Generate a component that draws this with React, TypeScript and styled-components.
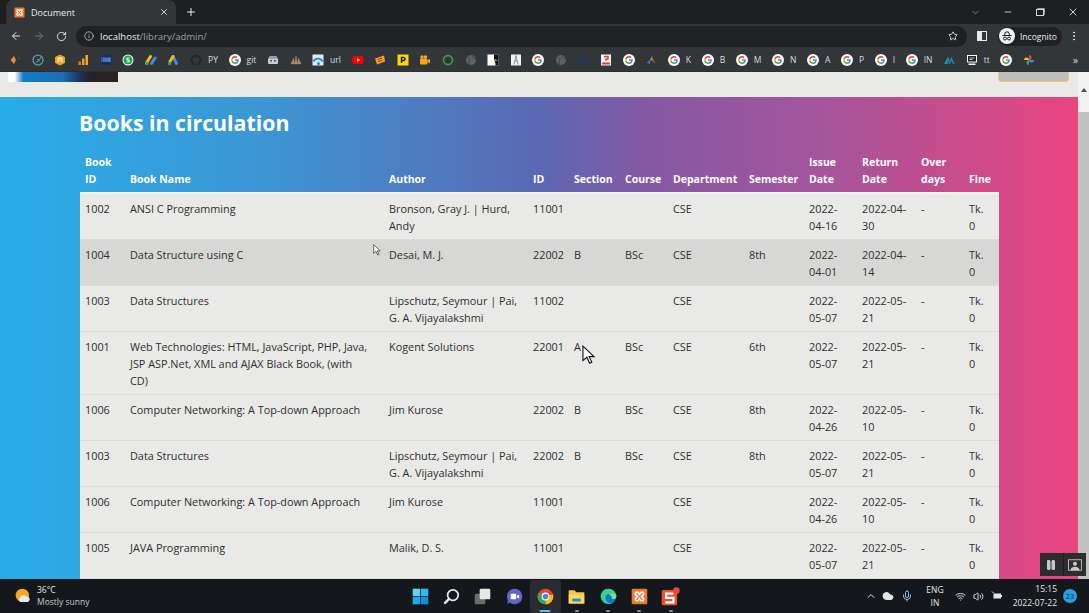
import React, { FC, ReactNode } from 'react'
import styled, { createGlobalStyle } from 'styled-components'
import { ArrowLeft, ArrowRight, RotateCw, Info, Star, X, Plus, ChevronDown, Minus, EllipsisVertical, ChevronUp, Mic, Wifi, Volume2, Cloud, Pause } from 'lucide-react'

const GlobalStyle = createGlobalStyle`
  html, body {
    margin: 0;
    padding: 0;
    height: 100%;
    overflow: hidden;
    background: #202124;
    font-family: "Open Sans", "Noto Sans", sans-serif;
  }
  * { box-sizing: border-box; }
`

// window
const Screen = styled('div')`
  position: relative;
  width: 1089px;
  height: 613px;
  display: flex;
  flex-direction: column;
  overflow: hidden;
`

// tab strip
const TabStrip = styled('div')`
  height: 24px;
  flex: none;
  background: #1c1e20;
  display: flex;
  align-items: flex-end;
  padding-left: 6px;
  color: #e8eaed;
`
const Tab = styled('div')`
  width: 170px;
  height: 24px;
  background: #323639;
  border-radius: 7px 7px 0 0;
  display: flex;
  align-items: center;
  padding: 0 7px 0 8px;
  font-size: 9px;
  gap: 6px;
`
const TabTitle = styled('span')`
  flex: 1;
`
const NewTab = styled('div')`
  width: 30px;
  height: 24px;
  display: flex;
  align-items: center;
  justify-content: center;
`
const WindowButtons = styled('div')`
  margin-left: auto;
  height: 24px;
  display: flex;
  align-items: center;
  color: #d5d7da;
`
const WindowButton = styled('div')`
  width: 32.5px;
  display: flex;
  justify-content: center;
  opacity: ${(p: { $dim?: boolean }) => (p.$dim ? 0.55 : 1)};
`
const RestoreIcon = styled('div')`
  width: 8px;
  height: 7px;
  border: 1px solid #d5d7da;
  box-shadow: 1px -1px 0 -0.3px #d5d7da;
`

// toolbar
const Toolbar = styled('div')`
  height: 24px;
  flex: none;
  background: #323639;
  display: flex;
  align-items: center;
  padding: 0 9px 0 4px;
  color: #e8eaed;
`
const NavButton = styled('div')`
  width: 23px;
  display: flex;
  justify-content: center;
  color: ${(p: { $off?: boolean }) => (p.$off ? '#73767a' : '#e8eaed')};
`
const AddressBar = styled('div')`
  width: 345px;
  flex: 1;
  height: 21px;
  margin-left: 3px;
  border-radius: 11px;
  background: #202124;
  display: flex;
  align-items: center;
  padding: 0 9px 0 8px;
  font-size: 9.5px;
  gap: 6px;
`
const Url = styled('span')`
  flex: 1;
  color: #9aa0a6;
  span { color: #e8eaed; }
`
const SidePanelIcon = styled('div')`
  width: 10px;
  height: 10px;
  margin: 0 11px 0 10px;
  border: 1.5px solid #e8eaed;
  border-left-width: 5px;
  background: #323639;
`
const ProfileChip = styled('div')`
  width: 64px;
  height: 19px;
  border-radius: 10px;
  background: #202124;
  display: flex;
  align-items: center;
  gap: 5px;
  padding-left: 1px;
  font-size: 8.5px;
`
const ProfileFace = styled('div')`
  width: 16px;
  height: 16px;
  border-radius: 50%;
  background: #f1f3f4;
  display: flex;
  align-items: center;
  justify-content: center;
`
const MoreButton = styled('div')`
  width: 18px;
  display: flex;
  justify-content: flex-end;
`

// bookmarks
const BookmarkBar = styled('div')`
  height: 24px;
  flex: none;
  background: #323639;
  display: flex;
  align-items: center;
  padding: 0 0 0 4px;
  color: #dadce0;
  font-size: 8.5px;
  border-bottom: 1px solid #2c2e31;
`
const Bookmark = styled('div')`
  height: 24px;
  display: flex;
  align-items: center;
  padding: 0 5.3px;
  gap: 6px;
`
const BookmarkOverflow = styled('div')`
  margin-left: auto;
  padding-right: 11px;
  font-size: 10px;
`

// page
const Viewport = styled('div')`
  flex: 1;
  min-height: 0;
  display: flex;
  overflow: hidden;
`
const Page = styled('div')`
  flex: 1;
  min-width: 0;
  background: #e9e9e7;
`
const Scrollbar = styled('div')`
  width: 11px;
  flex: none;
  background: #f1f1f1;
  display: flex;
  flex-direction: column;
  align-items: center;
  color: #505050;
`
const ScrollArrow = styled('div')`
  height: 15px;
  margin-top: 5px;
  font-size: 0;
  width: 0;
  border: 3px solid transparent;
  border-bottom: 4px solid #505050;
`
const ScrollThumb = styled('div')`
  width: 11px;
  flex: 1;
  margin-top: 20px;
  background: #c1c1c1;
`
const PageHeader = styled('header')`
  height: 25px;
  display: flex;
  justify-content: space-between;
  align-items: flex-start;
  padding: 0 9px 0 8px;
`
const LogoPiece = styled('div')`
  width: 110px;
  height: 10px;
  background: linear-gradient(90deg, #fdfdfd 0 6%, #0f7cc4 14%, #1a6fb5 50%, #16375c 65%, #2b2022 75%, #2b2022 100%);
`
const LoginButton = styled('div')`
  width: 71px;
  height: 10px;
  background: #bdbdbb;
  border: 1px solid #e8c878;
  border-top: none;
  border-radius: 0 0 4px 4px;
`
const Circulation = styled('section')`
  height: 600px;
  padding: 12px 80px 0;
  background: linear-gradient(90deg, #28ade9 0%, #3d95d3 25%, #5b68b3 50%, #8459a3 60%, #a9549b 78%, #c04e8e 86%, #ea4480 100%);
`
const Title = styled('h1')`
  margin: 0 0 17px -1px;
  height: 28px;
  font-size: 21.3px;
  line-height: 28px;
  font-weight: 700;
  color: #fff;
`
const Table = styled('table')`
  width: 919px;
  table-layout: fixed;
  border-collapse: collapse;
  font-size: 10.85px;
  line-height: 17px;
`
const HeadRow = styled('tr')`
  border-bottom: 2px solid #f4f4f4;
`
const HeadCell = styled('th')`
  padding: 0 3px 4px 5px;
  text-align: left;
  vertical-align: bottom;
  color: #fff;
  font-weight: 700;
  font-size: 10.5px;
  white-space: ${(p: { $nowrap?: boolean }) => (p.$nowrap ? 'nowrap' : 'normal')};
`
const Row = styled('tr')<{ $hover?: boolean }>`
  background: ${(p) => (p.$hover ? '#d7d7d5' : '#e9e9e7')};
  border-bottom: 1px solid #dcdcda;
`
const Cell = styled('td')<{ $padRight?: number }>`
  padding: 6px ${(p) => p.$padRight ?? 3}px 5px 5px;
  vertical-align: top;
  color: #2f2f2f;
`

// taskbar
const Taskbar = styled('div')`
  height: 34px;
  flex: none;
  background: #14181d;
  display: grid;
  grid-template-columns: 1fr auto 1fr;
  align-items: center;
  color: #e6e6e6;
  position: relative;
  z-index: 2;
`
const Weather = styled('div')`
  display: flex;
  align-items: center;
  gap: 6px;
  padding-left: 15px;
  font-size: 8.5px;
  line-height: 12px;
`
const WeatherSub = styled('div')`
  color: #c8c8c8;
`
const TaskIcons = styled('div')`
  display: flex;
  align-items: center;
  margin-left: 2px;
`
const TaskIcon = styled('div')<{ $active?: boolean; $open?: boolean }>`
  position: relative;
  width: 31.3px;
  height: 33px;
  display: flex;
  align-items: center;
  justify-content: center;
  border-radius: 3px;
  background: ${(p) => (p.$active ? '#292c30' : 'transparent')};
  &::after {
    content: '';
    display: ${(p) => (p.$open ? 'block' : 'none')};
    position: absolute;
    bottom: 1px;
    left: 50%;
    transform: translateX(-50%);
    width: ${(p) => (p.$active ? '11px' : '4px')};
    height: 2px;
    border-radius: 1px;
    background: ${(p) => (p.$active ? '#4cc2ff' : '#8b8d90')};
  }
`
const Tray = styled('div')`
  display: flex;
  align-items: center;
  justify-content: flex-end;
  gap: 7px;
  padding-right: 12px;
  font-size: 8.5px;
`
const TrayChevron = styled('div')`
  display: flex;
  margin-right: -2px;
`
const Lang = styled('div')`
  text-align: center;
  line-height: 13px;
  margin: 0 4px 0 6px;
`
const Clock = styled('div')`
  text-align: right;
  line-height: 14px;
  margin: 0 -1px 0 3px;
`
const Badge = styled('div')`
  width: 14px;
  height: 14px;
  border-radius: 50%;
  background: #2b9fe6;
  color: #0d2a40;
  font-size: 7.5px;
  display: flex;
  align-items: center;
  justify-content: center;
`

// overlays
const RecorderPanel = styled('div')`
  position: absolute;
  left: 1040px;
  top: 553px;
  width: 46px;
  height: 23px;
  background: #2d2d30;
  display: flex;
  color: #c9c9c9;
  z-index: 3;
`
const RecorderButton = styled('div')`
  flex: 1;
  display: flex;
  align-items: center;
  justify-content: center;
  & + & { border-left: 1px solid #1d1d1f; }
`
const Pointer = styled('svg')<{ $x: number; $y: number }>`
  position: absolute;
  left: ${(p) => p.$x}px;
  top: ${(p) => p.$y}px;
  z-index: 3;
`

// drawings
const G: FC = () => (
  <svg width="12" height="12" viewBox="0 0 24 24">
    <circle cx="12" cy="12" r="12" fill="#fff" />
    <path d="M19.6 12.2c0-.6-.1-1.1-.2-1.6H12v3.1h4.3a3.700 3.700 0 0 1-1.600 2.400v2h2.600c1.500-1.400 2.300-3.400 2.300-5.900z" fill="#4285f4" />
    <path d="M12 20c2.200 0 4-.7 5.300-1.900l-2.600-2a4.800 4.800 0 0 1-7.200-2.500H4.900v2.100A8 8 0 0 0 12 20z" fill="#34a853" />
    <path d="M7.500 13.600a4.800 4.800 0 0 1 0-3.200V8.300H4.900a8 8 0 0 0 0 7.400z" fill="#fbbc05" />
    <path d="M12 7.200c1.200 0 2.300.4 3.100 1.200l2.300-2.300A8 8 0 0 0 4.900 8.300l2.600 2.100A4.800 4.800 0 0 1 12 7.200z" fill="#ea4335" />
  </svg>
)
const Fav: FC<{ children: ReactNode }> = ({ children }) => (
  <svg width="12" height="12" viewBox="0 0 24 24">{children}</svg>
)
const Xampp: FC<{ size: number }> = ({ size }) => (
  <svg width={size} height={size} viewBox="0 0 24 24">
    <rect x="1" y="1" width="22" height="22" rx="2" fill="#f0782d" />
    <path d="M7 6h3l2 3 2-3h3l1 3-3 3 3 3-1 3h-3l-2-3-2 3H7l-1-3 3-3-3-3z" fill="none" stroke="#fff" strokeWidth="2.400" />
  </svg>
)
const favicons: Record<string, ReactNode> = {
  drop: <><path d="M10 4 3 12l7 8 4-8z" fill="#ef8a2c" /><circle cx="20" cy="9" r="2.500" fill="#17566b" /></>,
  swirl: <><circle cx="12" cy="12" r="10" fill="none" stroke="#4fa6b5" strokeWidth="2.500" /><path d="M7 16c5 0 9-3 10-10M10 11c3-1 5 1 4 4" fill="none" stroke="#4fa6b5" strokeWidth="2" /></>,
  hex: <><path d="M12 1 22 6v12l-10 5-10-5V6z" fill="#f29f1c" /><path d="M8 17V8h8v9M12 8v7" stroke="#fff" strokeWidth="2" fill="none" /></>,
  bars: <><rect x="3" y="15" width="5" height="7" fill="#e37b20" /><rect x="10" y="9" width="5" height="13" fill="#ef9a2a" /><rect x="17" y="2" width="5" height="20" fill="#f5a623" /></>,
  ieee: <><rect x="1" y="2" width="22" height="20" fill="#12306b" /><rect x="3" y="7" width="18" height="9" fill="#6e8cc4" /><path d="M5 7v9M8 7v9M12 7v9M16 7v9" stroke="#12306b" strokeWidth="1.200" /></>,
  whats: <><circle cx="12" cy="12" r="11" fill="#fff" /><circle cx="12" cy="12" r="9" fill="#16a34a" /><path d="M15 8H10L9.500 12H14.500V16H9" stroke="#fff" strokeWidth="2" fill="none" /></>,
  ads: <><path d="M3 18 11 5" stroke="#fbbc05" strokeWidth="6" strokeLinecap="round" /><path d="M13 19 20 8" stroke="#4285f4" strokeWidth="6" strokeLinecap="round" /><circle cx="4" cy="19" r="3.500" fill="#34a853" /></>,
  adsTri: <><path d="M12 5 19 19" stroke="#4285f4" strokeWidth="6" strokeLinecap="round" /><path d="M12 5 6 15" stroke="#fbbc05" strokeWidth="6" strokeLinecap="round" /><circle cx="5" cy="19" r="3.500" fill="#34a853" /></>,
  github: <><circle cx="12" cy="12" r="11" fill="#24272a" /><path d="M8 21v-5c-3-1-3-3-3-6 0-3 3-4 7-4s7 1 7 4c0 3 0 5-3 6v5" fill="#323639" /></>,
  drive: <><rect x="2" y="8" width="20" height="12" rx="2" fill="#c9ced3" /><rect x="4" y="4" width="16" height="6" rx="2" fill="#8fa2b3" /><rect x="6" y="12" width="4" height="3" fill="#4b5563" /><rect x="14" y="12" width="4" height="3" fill="#4b5563" /></>,
  sails: <path d="M2 20 7 8l2 12zM9 20l3-17 3 17zM15 20l2-12 5 12z" fill="#c98a52" stroke="#8c8c8c" strokeWidth="0.800" />,
  wave: <><rect x="1" y="1" width="22" height="22" fill="#dfe8f5" /><path d="M3 15a10 10 0 0 1 18 0" fill="none" stroke="#1e88e5" strokeWidth="3.500" /><circle cx="13" cy="19" r="3" fill="#1e88e5" /></>,
  youtube: <><rect x="1" y="4" width="22" height="16" rx="4" fill="#f00" /><path d="M10 8.500v7l6-3.500z" fill="#fff" /></>,
  box: <><path d="M2 9 20 3l2 12-16 6z" fill="#f4a020" /><path d="M7 11l9-3M8 15l9-3" stroke="#a5400f" strokeWidth="2" /></>,
  parking: <><rect x="1" y="1" width="22" height="22" fill="#ffd800" /><path d="M9 18V7h4a3 3 0 0 1 0 6H9" fill="none" stroke="#1a1a1a" strokeWidth="2.800" /></>,
  camera: <><rect x="2" y="9" width="15" height="12" rx="2" fill="#f5a81f" /><circle cx="6" cy="6" r="3.500" fill="#f5a81f" /><circle cx="13" cy="6" r="3.500" fill="#f5a81f" /><path d="M17 13l5-3v9l-5-3z" fill="#f5a81f" /></>,
  ring: <circle cx="12" cy="12" r="9" fill="none" stroke="#2f9e44" strokeWidth="3.500" />,
  globe: <><circle cx="12" cy="12" r="10" fill="#5f6368" /><path d="M5 7c3 0 5 2 5 4s-3 2-3 5l3 5M14 3c0 3 2 3 3 5s3 2 5 2" stroke="#3c4043" strokeWidth="2" fill="none" /></>,
  bird: <><rect x="1" y="1" width="22" height="22" fill="#fff" /><path d="M14 1h9v22h-6c0-5-1-9-3-12z" fill="#111" /><path d="M15 10l7 3-6 1z" fill="#f0a020" /></>,
  tower: <><rect x="2" y="1" width="20" height="22" fill="#f1f1f1" /><path d="M12 3 8 21M12 3l4 18M9 14h6" stroke="#777" strokeWidth="1.500" fill="none" /></>,
  ex: <path d="M2 7h8v2H5v2h4v2H5v2h5v2H2zM12 7h3l2 3 2-3h3l-4 5 4 5h-3l-2-3-2 3h-3l4-5z" fill="#0f3a6e" />,
  redDoc: <><rect x="2" y="1" width="20" height="22" fill="#f5f5f5" /><path d="M8 5h8v5h-4v3" stroke="#e53935" strokeWidth="3" fill="none" /><rect x="4" y="17" width="16" height="4" fill="#e53935" /></>,
  swoosh: <><path d="M3 17c5-1 8-6 11-14 1 6 3 11 7 15-3-1-5-3-7-6z" fill="#ef6c2b" /><path d="M3 17c4-1 6-3 8-6l-1 9z" fill="#1e88e5" /></>,
  peaks: <path d="M2 20 10 5l3 6-4 9zM11 20l4-10 2-4 6 14h-3l-3-7-3 7z" fill="#1b8fb4" />,
  monitor: <><rect x="2" y="2" width="20" height="15" fill="#f5f5f5" /><rect x="4" y="4" width="16" height="11" fill="#222" /><path d="M7 8h10M7 11h6" stroke="#eee" strokeWidth="1.500" /><rect x="5" y="19" width="14" height="3" fill="#f5f5f5" /></>,
  pinwheel: <><path d="M12 12V2a5 5 0 0 1 0 10z" fill="#ea4335" /><path d="M12 12h10a5 5 0 0 1-10 0z" fill="#4285f4" /><path d="M12 12v10a5 5 0 0 1 0-10z" fill="#34a853" /><path d="M12 12H2a5 5 0 0 1 10 0z" fill="#fbbc05" /></>,
}

const bookmarks: { icon: string; label?: string }[] = [
  { icon: 'drop' }, { icon: 'swirl' }, { icon: 'hex' }, { icon: 'bars' }, { icon: 'ieee' },
  { icon: 'whats' }, { icon: 'ads' }, { icon: 'adsTri' }, { icon: 'github', label: 'PY' },
  { icon: 'g', label: 'git' }, { icon: 'drive' }, { icon: 'sails' }, { icon: 'wave', label: 'url' },
  { icon: 'youtube' }, { icon: 'box' }, { icon: 'parking' }, { icon: 'camera' }, { icon: 'ring' },
  { icon: 'globe' }, { icon: 'bird' }, { icon: 'tower' }, { icon: 'g' }, { icon: 'globe' },
  { icon: 'ex' }, { icon: 'redDoc' }, { icon: 'g' }, { icon: 'swoosh' }, { icon: 'g', label: 'K' },
  { icon: 'g', label: 'B' }, { icon: 'g', label: 'M' }, { icon: 'g', label: 'N' }, { icon: 'g', label: 'A' },
  { icon: 'g', label: 'P' }, { icon: 'g', label: 'I' }, { icon: 'g', label: 'IN' }, { icon: 'peaks' },
  { icon: 'monitor', label: 'tt' }, { icon: 'g' }, { icon: 'pinwheel' },
]

const columns: { label: string; width: number; nowrap?: boolean; padRight?: number }[] = [
  { label: 'Book ID', width: 45 },
  { label: 'Book Name', width: 259, nowrap: true, padRight: 14 },
  { label: 'Author', width: 144 },
  { label: 'ID', width: 41 },
  { label: 'Section', width: 51 },
  { label: 'Course', width: 48 },
  { label: 'Department', width: 76, nowrap: true },
  { label: 'Semester', width: 60, nowrap: true },
  { label: 'Issue Date', width: 53, padRight: 8 },
  { label: 'Return Date', width: 59 },
  { label: 'Over days', width: 48 },
  { label: 'Fine', width: 35, padRight: 11 },
]

const books = [
  ['1002', 'ANSI C Programming', 'Bronson, Gray J. | Hurd, Andy', '11001', '', '', 'CSE', '', '2022-04-16', '2022-04-30', '-', 'Tk. 0'],
  ['1004', 'Data Structure using C', 'Desai, M. J.', '22002', 'B', 'BSc', 'CSE', '8th', '2022-04-01', '2022-04-14', '-', 'Tk. 0'],
  ['1003', 'Data Structures', 'Lipschutz, Seymour | Pai, G. A. Vijayalakshmi', '11002', '', '', 'CSE', '', '2022-05-07', '2022-05-21', '-', 'Tk. 0'],
  ['1001', 'Web Technologies: HTML, JavaScript, PHP, Java, JSP ASP.Net, XML and AJAX Black Book, (with CD)', 'Kogent Solutions', '22001', 'A', 'BSc', 'CSE', '6th', '2022-05-07', '2022-05-21', '-', 'Tk. 0'],
  ['1006', 'Computer Networking: A Top-down Approach', 'Jim Kurose', '22002', 'B', 'BSc', 'CSE', '8th', '2022-04-26', '2022-05-10', '-', 'Tk. 0'],
  ['1003', 'Data Structures', 'Lipschutz, Seymour | Pai, G. A. Vijayalakshmi', '22002', 'B', 'BSc', 'CSE', '8th', '2022-05-07', '2022-05-21', '-', 'Tk. 0'],
  ['1006', 'Computer Networking: A Top-down Approach', 'Jim Kurose', '11001', '', '', 'CSE', '', '2022-04-26', '2022-05-10', '-', 'Tk. 0'],
  ['1005', 'JAVA Programming', 'Malik, D. S.', '11001', '', '', 'CSE', '', '2022-05-07', '2022-05-21', '-', 'Tk. 0'],
]

const App: FC = () => (
  <Screen>
    <GlobalStyle />
    <TabStrip>
      <Tab>
        <Xampp size={11} />
        <TabTitle>Document</TabTitle>
        <X size={10} />
      </Tab>
      <NewTab><Plus size={12} /></NewTab>
      <WindowButtons>
        <WindowButton $dim><ChevronDown size={11} /></WindowButton>
        <WindowButton><Minus size={10} /></WindowButton>
        <WindowButton><RestoreIcon /></WindowButton>
        <WindowButton><X size={12} /></WindowButton>
      </WindowButtons>
    </TabStrip>
    <Toolbar>
      <NavButton><ArrowLeft size={12} /></NavButton>
      <NavButton $off><ArrowRight size={12} /></NavButton>
      <NavButton><RotateCw size={11} /></NavButton>
      <AddressBar>
        <Info size={10} color="#bdc1c6" />
        <Url><span>localhost</span>/library/admin/</Url>
        <Star size={10} />
      </AddressBar>
      <SidePanelIcon />
      <ProfileChip>
        <ProfileFace>
          <svg width="12" height="12" viewBox="0 0 24 24" fill="none" stroke="#202124" strokeWidth="2">
            <path d="M3 11h18M7 10l2-6h6l2 6" />
            <circle cx="8" cy="17" r="3" />
            <circle cx="16" cy="17" r="3" />
          </svg>
        </ProfileFace>
        Incognito
      </ProfileChip>
      <MoreButton><EllipsisVertical size={12} /></MoreButton>
    </Toolbar>
    <BookmarkBar>
      {bookmarks.map((b, i) => (
        <Bookmark key={i}>
          {b.icon === 'g' ? <G /> : <Fav>{favicons[b.icon]}</Fav>}
          {b.label && <span>{b.label}</span>}
        </Bookmark>
      ))}
      <BookmarkOverflow>»</BookmarkOverflow>
    </BookmarkBar>
    <Viewport>
      <Page>
        <PageHeader>
          <LogoPiece />
          <LoginButton />
        </PageHeader>
        <Circulation>
          <Title>Books in circulation</Title>
          <Table>
            <colgroup>
              {columns.map((c) => <col key={c.label} style={{ width: c.width }} />)}
            </colgroup>
            <thead>
              <HeadRow>
                {columns.map((c) => <HeadCell key={c.label} $nowrap={c.nowrap}>{c.label}</HeadCell>)}
              </HeadRow>
            </thead>
            <tbody>
              {books.map((b, i) => (
                <Row key={i} $hover={i === 1}>
                  {b.map((v, j) => <Cell key={j} $padRight={columns[j].padRight}>{v}</Cell>)}
                </Row>
              ))}
            </tbody>
          </Table>
        </Circulation>
      </Page>
      <Scrollbar>
        <ScrollArrow />
        <ScrollThumb />
      </Scrollbar>
    </Viewport>
    <Taskbar>
      <Weather>
        <svg width="16" height="16" viewBox="0 0 24 24">
          <circle cx="11" cy="11" r="10" fill="#f6a623" />
          <path d="M8 21a4 4 0 0 1 0-7 5 5 0 0 1 9-1 4 4 0 0 1 5 4 4 4 0 0 1-3 4z" fill="#e8e8ee" />
        </svg>
        <div>
          36°C
          <WeatherSub>Mostly sunny</WeatherSub>
        </div>
      </Weather>
      <TaskIcons>
        <TaskIcon>
          <svg width="17" height="17" viewBox="0 0 24 24">
            <path d="M1 1h10.500v10.500H1z" fill="#5fd3fb" />
            <path d="M12.500 1H23v10.500H12.500z" fill="#34b8f2" />
            <path d="M1 12.500h10.500V23H1z" fill="#1fa8ec" />
            <path d="M12.500 12.500H23V23H12.500z" fill="#0f8fdc" />
          </svg>
        </TaskIcon>
        <TaskIcon>
          <svg width="17" height="17" viewBox="0 0 24 24" fill="none">
            <circle cx="14" cy="10" r="7.500" stroke="#e8e8e8" strokeWidth="2.500" />
            <path d="M8.500 15.500 3 21" stroke="#e8e8e8" strokeWidth="3.500" strokeLinecap="round" />
          </svg>
        </TaskIcon>
        <TaskIcon>
          <svg width="17" height="17" viewBox="0 0 24 24">
            <rect x="1" y="8" width="15" height="15" rx="2" fill="#6b6b6b" />
            <rect x="8" y="1" width="15" height="15" rx="2" fill="#e8e8e8" />
          </svg>
        </TaskIcon>
        <TaskIcon>
          <svg width="17" height="17" viewBox="0 0 24 24">
            <path d="M12 1a11 11 0 1 1-7 19.500L2 23l.5-6A11 11 0 0 1 12 1z" fill="#6264c7" />
            <rect x="6.500" y="8" width="8" height="8" rx="1.500" fill="#fff" />
            <path d="M15.500 11l3-2v6l-3-2z" fill="#fff" />
          </svg>
        </TaskIcon>
        <TaskIcon $active $open>
          <svg width="17" height="17" viewBox="0 0 24 24">
            <circle cx="12" cy="12" r="11" fill="#ea4335" />
            <path d="M12 12 22.500 9A11 11 0 0 1 12 23z" fill="#fbbc05" />
            <path d="M12 12 12 23A11 11 0 0 1 2 7z" fill="#34a853" />
            <circle cx="12" cy="12" r="5.500" fill="#fff" />
            <circle cx="12" cy="12" r="4" fill="#4285f4" />
          </svg>
        </TaskIcon>
        <TaskIcon $open>
          <svg width="17" height="17" viewBox="0 0 24 24">
            <path d="M1 3h8l3 3h11v16H1z" fill="#f5c542" />
            <path d="M1 9h22v13H1z" fill="#fbd661" />
            <rect x="6" y="15" width="12" height="4" fill="#1a8fd8" />
          </svg>
        </TaskIcon>
        <TaskIcon $open>
          <svg width="17" height="17" viewBox="0 0 24 24">
            <circle cx="12" cy="12" r="11" fill="#0f78c9" />
            <path d="M1 12a11 11 0 0 1 22 0c0 3-3 4-6 3 1-5-3-8-7-6-3 2-3 7 0 10 2 2 5 3 7 2a11 11 0 0 1-16-9z" fill="#3fcf8e" />
            <path d="M23 12c0 3-3 4-6 3 0-4-3-6-5-6 4-2 11-2 11 3z" fill="#7fe06f" />
          </svg>
        </TaskIcon>
        <TaskIcon $open><Xampp size={17} /></TaskIcon>
        <TaskIcon $open>
          <svg width="19" height="19" viewBox="0 0 26 26">
            <rect x="1" y="4" width="21" height="21" rx="2" fill="#f0512d" />
            <path d="M17 9H7v6h10v6H6" fill="none" stroke="#fff" strokeWidth="3" />
            <circle cx="21" cy="5" r="4.500" fill="#e9483a" />
          </svg>
        </TaskIcon>
      </TaskIcons>
      <Tray>
        <TrayChevron><ChevronUp size={12} /></TrayChevron>
        <Cloud size={12} fill="#e6e6e6" />
        <Mic size={12} color="#7ec3e6" />
        <Lang>ENG<br />IN</Lang>
        <Wifi size={11} />
        <Volume2 size={11} />
        <svg width="12" height="12" viewBox="0 0 24 24">
          <rect x="5" y="7" width="15" height="10" fill="#e6e6e6" />
          <path d="M2 3 6 7" stroke="#e6e6e6" strokeWidth="2" />
          <rect x="20" y="10" width="2" height="4" fill="#e6e6e6" />
        </svg>
        <Clock>15:15<br />2022-07-22</Clock>
        <Badge>23</Badge>
      </Tray>
    </Taskbar>
    <RecorderPanel>
      <RecorderButton><Pause size={12} fill="#c9c9c9" /></RecorderButton>
      <RecorderButton>
        <svg width="14" height="12" viewBox="0 0 24 20">
          <rect x="1" y="1" width="22" height="18" fill="none" stroke="#c9c9c9" strokeWidth="1.500" />
          <circle cx="12" cy="8" r="3.500" fill="#c9c9c9" />
          <path d="M4 19c1-5 4-6 8-6s7 1 8 6z" fill="#c9c9c9" />
        </svg>
      </RecorderButton>
    </RecorderPanel>
    <Pointer $x={373} $y={244} width="8" height="12" viewBox="0 0 12 18">
      <path d="M1 1v13l3.500-3 2.500 5.500 2-1-2.500-5H11z" fill="#fff" stroke="#222" strokeWidth="1" />
    </Pointer>
    <Pointer $x={581} $y={345} width="15" height="20" viewBox="0 0 12 18">
      <path d="M1 1v13l3.500-3 2.500 5.500 2-1-2.500-5H11z" fill="#fff" stroke="#111" strokeWidth="1" />
    </Pointer>
  </Screen>
)

export default App
